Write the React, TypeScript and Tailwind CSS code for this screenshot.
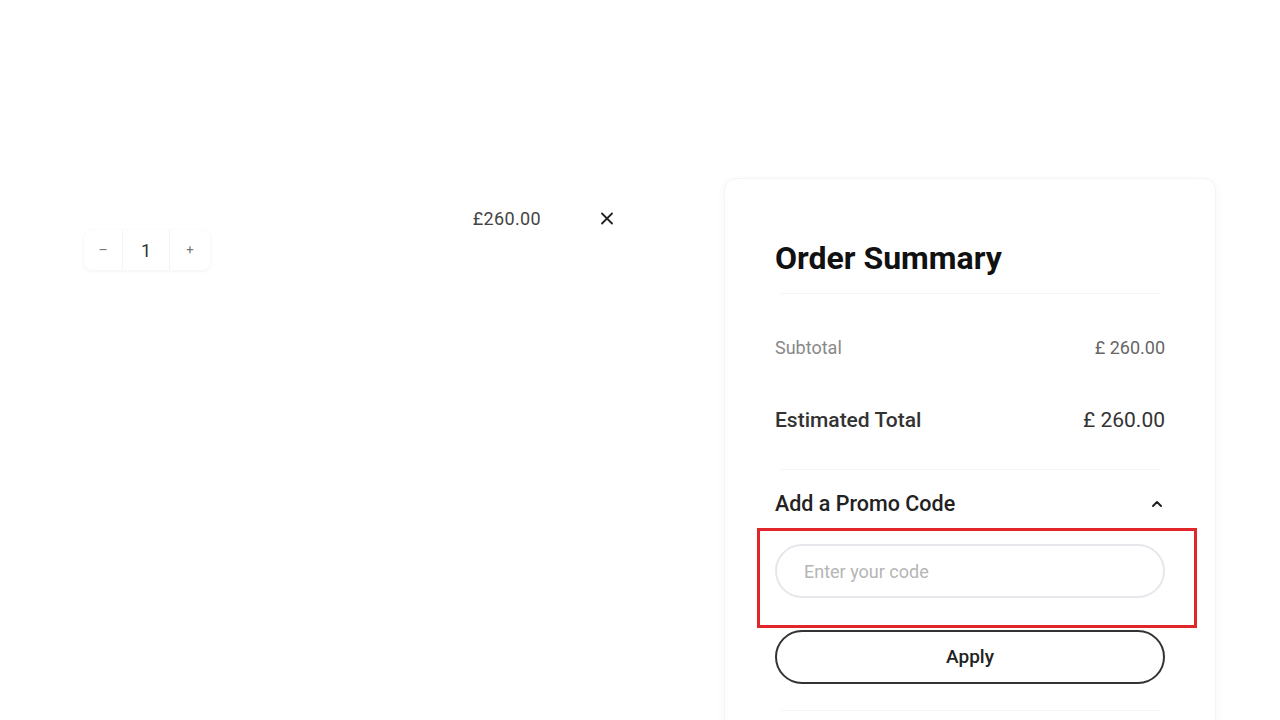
import { X, ChevronUp } from "lucide-react";

export default function App() {
  return (
    <div className="min-h-[720px] w-full bg-white font-['Roboto',sans-serif] text-[#222]">
      <div className="flex pl-[84px] pr-[64px] pt-[178px]">
        {/* cart item */}
        <div className="w-[540px]">
          <div className="flex items-center justify-end pt-[27px] pr-[7px]">
            <span className="text-[18px] tracking-[0.02em] text-[#444]">£260.00</span>
            <button className="ml-[56px] flex h-5 w-5 items-center justify-center text-[#222]">
              <X size={21} strokeWidth={2.2} />
            </button>
          </div>
          <div className="-mt-[2px] flex h-10 w-[126px] items-center rounded-lg shadow-[0_1px_4px_rgba(0,0,0,0.06)]">
            <button className="flex h-10 w-[38px] items-center justify-center text-[14px] text-[#777]">
              –
            </button>
            <span className="flex h-10 w-[48px] items-center justify-center border-x border-gray-100 text-[18px] text-[#333]">
              1
            </span>
            <button className="flex h-10 w-[40px] items-center justify-center text-[13px] text-[#777]">
              +
            </button>
          </div>
        </div>

        {/* order summary */}
        <div className="ml-auto h-[560px] w-[492px] rounded-xl border border-gray-100 bg-white px-[50px] pt-[60px] shadow-[0_2px_10px_rgba(0,0,0,0.04)]">
          <h2 className="text-[32px] font-bold leading-[38px] text-[#111]">Order Summary</h2>
          <div className="mx-1.5 mt-[16px] h-px bg-gray-100" />

          <div className="mt-[42px] flex items-center justify-between text-[18px] leading-6 text-[#888]">
            <span>Subtotal</span>
            <span className="text-[#666]">£ 260.00</span>
          </div>
          <div className="mt-[46px] flex items-center justify-between text-[21px] leading-7 text-[#333]">
            <span className="font-medium">Estimated Total</span>
            <span className="text-[21px] text-[#333]">£ 260.00</span>
          </div>
          <div className="mx-1.5 mt-[35px] h-px bg-gray-100" />

          <div className="mt-[20px] flex items-center justify-between">
            <span className="text-[21.5px] font-medium leading-7 text-[#222]">Add a Promo Code</span>
            <ChevronUp size={16} strokeWidth={3} className="text-[#222]" />
          </div>

          <div className="-ml-[18px] -mr-[32px] mt-[10px] border-[3px] border-[#e0262b] pb-[27px] pl-[15px] pr-[29px] pt-[13px]">
            <input
              type="text"
              placeholder="Enter your code"
              className="h-[54px] w-full rounded-full border-2 border-gray-200 px-[27px] text-[18px] text-[#333] outline-none placeholder:text-[#b5b5b5]"
            />
          </div>

          <button className="mt-[2px] h-[54px] w-full rounded-full border-2 border-[#333] text-[19px] font-medium text-[#222]">
            Apply
          </button>
          <div className="mx-1.5 mt-[26px] h-px bg-gray-100" />
        </div>
      </div>
    </div>
  );
}
